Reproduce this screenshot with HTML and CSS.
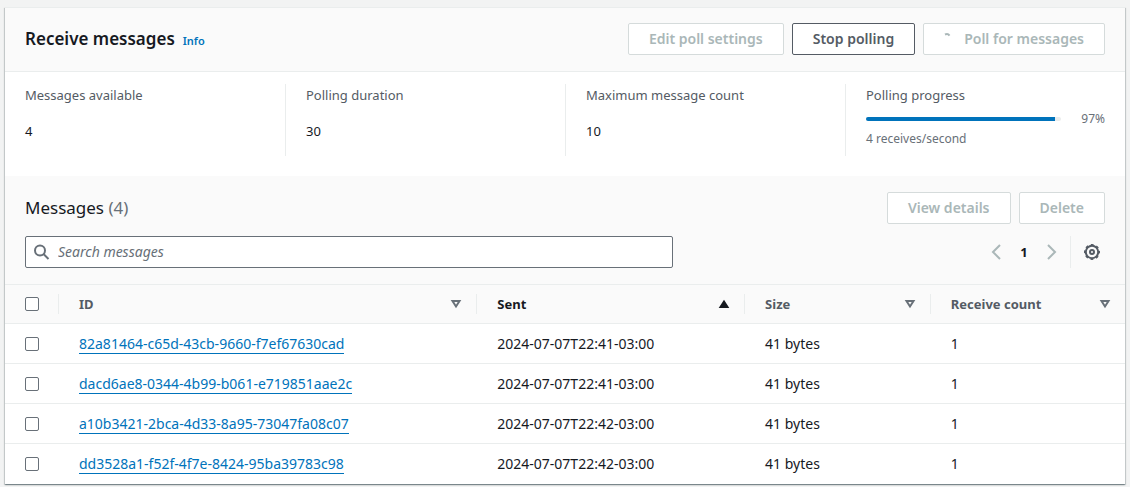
FILE: index.html
```html
<!DOCTYPE html>
<html lang="en">
<head>
<meta charset="utf-8">
<meta name="viewport" content="width=device-width, initial-scale=1">
<title>Receive messages</title>
<link rel="stylesheet" href="styles.css">
</head>
<body>
<main class="panel">
  <header class="panel-header">
    <div class="heading">
      <h1 class="title">Receive messages</h1>
      <a class="info" href="#info">Info</a>
    </div>
    <div class="actions">
      <button class="button" type="button" disabled>Edit poll settings</button>
      <button class="button" type="button">Stop polling</button>
      <button class="button button-loading" type="button" disabled>
        <svg class="spinner" viewBox="0 0 16 16" aria-hidden="true"><path d="M1 3.500C3 2.500 4.500 3 5.500 4.600"/></svg>
        Poll for messages
      </button>
    </div>
  </header>

  <section class="stats">
    <div class="stat"><div class="label">Messages available</div><div class="value">4</div></div>
    <div class="stat"><div class="label">Polling duration</div><div class="value">30</div></div>
    <div class="stat"><div class="label">Maximum message count</div><div class="value">10</div></div>
    <div class="stat">
      <div class="label">Polling progress</div>
      <div class="progress-row">
        <div class="track" role="progressbar" aria-label="Polling progress" aria-valuenow="97" aria-valuemin="0" aria-valuemax="100"><div class="fill" style="width:97%"></div></div>
        <span class="percent">97%</span>
      </div>
      <div class="rate">4 receives/second</div>
    </div>
  </section>

  <section>
    <div class="list-header">
      <div class="list-top">
        <h2 class="subtitle">Messages <span class="counter">(4)</span></h2>
        <div class="actions">
          <button class="button" type="button" disabled>View details</button>
          <button class="button" type="button" disabled>Delete</button>
        </div>
      </div>
      <div class="tools">
        <label class="search">
          <svg class="icon" viewBox="0 0 16 16" aria-hidden="true"><circle cx="6" cy="6.500" r="5"/><path d="M9.500 10l5 5"/></svg>
          <input class="search-input" type="search" placeholder="Search messages" aria-label="Search messages">
        </label>
        <div class="pager">
          <button class="icon-button" type="button" aria-label="Previous page" disabled><svg class="icon" viewBox="0 0 16 16"><path d="M12 1L5 8l7 7"/></svg></button>
          <button class="page" type="button" aria-current="page">1</button>
          <button class="icon-button" type="button" aria-label="Next page" disabled><svg class="icon" viewBox="0 0 16 16"><path d="M4 1l7 7-7 7"/></svg></button>
          <div class="settings">
            <button class="icon-button" type="button" aria-label="Preferences"><svg class="icon" viewBox="0 0 16 16"><circle cx="8" cy="8" r="6.200"/><circle cx="8" cy="8" r="7.300" stroke-width="1.400" stroke-dasharray="2.867 2.867" stroke-dashoffset="1.433"/><circle cx="8" cy="8" r="2"/></svg></button>
          </div>
        </div>
      </div>
    </div>

    <table class="table">
      <colgroup><col class="col-check"><col class="col-id"><col class="col-sent"><col class="col-size"><col class="col-count"></colgroup>
      <thead>
        <tr>
          <th scope="col"><div class="head"><input class="check" type="checkbox" aria-label="Select all messages"></div></th>
          <th scope="col"><div class="head">ID<svg class="sort" viewBox="0 0 12 10" aria-hidden="true"><path d="M2.500 2h7L6 7.500z"/></svg></div></th>
          <th scope="col" class="sorted" aria-sort="ascending"><div class="head">Sent<svg class="sort" viewBox="0 0 12 10" aria-hidden="true"><path d="M2.500 8h7L6 2.500z"/></svg></div></th>
          <th scope="col"><div class="head">Size<svg class="sort" viewBox="0 0 12 10" aria-hidden="true"><path d="M2.500 2h7L6 7.500z"/></svg></div></th>
          <th scope="col"><div class="head">Receive count<svg class="sort" viewBox="0 0 12 10" aria-hidden="true"><path d="M2.500 2h7L6 7.500z"/></svg></div></th>
        </tr>
      </thead>
      <tbody>
        <tr><td><input class="check" type="checkbox" aria-label="Select message 82a81464"></td><td><a class="link" href="#m1">82a81464-c65d-43cb-9660-f7ef67630cad</a></td><td>2024-07-07T22:41-03:00</td><td>41 bytes</td><td>1</td></tr>
        <tr><td><input class="check" type="checkbox" aria-label="Select message dacd6ae8"></td><td><a class="link" href="#m2">dacd6ae8-0344-4b99-b061-e719851aae2c</a></td><td>2024-07-07T22:41-03:00</td><td>41 bytes</td><td>1</td></tr>
        <tr><td><input class="check" type="checkbox" aria-label="Select message a10b3421"></td><td><a class="link" href="#m3">a10b3421-2bca-4d33-8a95-73047fa08c07</a></td><td>2024-07-07T22:42-03:00</td><td>41 bytes</td><td>1</td></tr>
        <tr><td><input class="check" type="checkbox" aria-label="Select message dd3528a1"></td><td><a class="link" href="#m4">dd3528a1-f52f-4f7e-8424-95ba39783c98</a></td><td>2024-07-07T22:42-03:00</td><td>41 bytes</td><td>1</td></tr>
      </tbody>
    </table>
  </section>
</main>
</body>
</html>
```
FILE: styles.css
```css
* { box-sizing: border-box; }
body {
  margin: 0;
  padding: 7px 5px 2px;
  background: #f2f3f3;
  color: #16191f;
  font: 13px/20px "Noto Sans", "Open Sans", sans-serif;
}
button, input { font: inherit; color: inherit; }

.panel {
  background: #fff;
  border-top: 1px solid #eaeded;
  box-shadow: 0 1px 1px 0 rgba(0, 28, 36, .3), 1px 1px 1px 0 rgba(0, 28, 36, .15), -1px 1px 1px 0 rgba(0, 28, 36, .15);
}
.panel-header {
  display: flex;
  justify-content: space-between;
  align-items: center;
  padding: 15px 20px 16px;
  background: #fafafa;
  border-bottom: 1px solid #eaeded;
}
.heading { display: flex; align-items: baseline; gap: 8px; }
.title { margin: 0; font-size: 17px; line-height: 24px; font-weight: 600; }
.info { color: #0073bb; font-size: 11px; font-weight: 600; text-decoration: none; }

.actions { display: flex; gap: 8px; }
.button {
  height: 32px;
  padding: 0 20px;
  border: 1px solid #545b64;
  border-radius: 2px;
  background: #fff;
  color: #545b64;
  font-size: 14px;
  font-weight: 600;
  white-space: nowrap;
}
.button:disabled { border-color: #d5dbdb; color: #aab7b8; }
.button-loading { display: flex; align-items: center; gap: 4px; }
.spinner { width: 16px; height: 16px; fill: none; stroke: #aab7b8; stroke-width: 2; }

.stats {
  display: grid;
  grid-template-columns: repeat(4, 1fr);
  padding: 12px 0 20px;
}
.stat { min-height: 72px; padding: 1px 20px 0; }
.stat + .stat { border-left: 1px solid #eaeded; }
.label { color: #545b64; }
.value { margin-top: 16px; }
.progress-row { display: flex; align-items: center; gap: 20px; margin-top: 4px; }
.track { flex: 1; height: 4px; border-radius: 4px; background: #eaeded; overflow: hidden; }
.fill { height: 100%; background: #0073bb; }
.percent, .rate { color: #687078; font-size: 12px; }

.list-header { padding: 16px 20px; background: #fafafa; border-bottom: 1px solid #eaeded; }
.list-top { display: flex; justify-content: space-between; align-items: center; }
.subtitle { margin: 0; font-size: 17px; line-height: 24px; font-weight: 400; }
.counter { color: #687078; }
.tools { display: flex; justify-content: space-between; margin-top: 12px; }
.search {
  display: flex;
  align-items: center;
  gap: 8px;
  width: 60%;
  height: 32px;
  padding: 0 8px;
  border: 1px solid #687078;
  border-radius: 2px;
  background: #fff;
  color: #687078;
}
.search-input { flex: 1; min-width: 0; padding: 0; border: 0; outline: 0; background: none; font-size: 14px; appearance: none; }
.search-input::placeholder { color: #687078; font-style: italic; opacity: 1; }
.icon { display: block; width: 16px; height: 16px; fill: none; stroke: currentColor; stroke-width: 2; }
.pager { display: flex; align-items: center; }
.icon-button { padding: 0; border: 0; background: none; color: #545b64; }
.icon-button:disabled { color: #aab7b8; }
.page { width: 40px; padding: 0; border: 0; background: none; font-weight: 700; }
.settings { display: flex; align-items: center; height: 32px; margin-left: 10px; padding: 0 5px 0 13px; border-left: 1px solid #eaeded; }

.table { width: 100%; border-collapse: separate; border-spacing: 0; table-layout: fixed; }
.col-check { width: 53px; }
.col-id { width: 39.2%; }
.col-sent { width: 25.1%; }
.col-size { width: 17.4%; }
.col-count { width: 18.3%; }
th { height: 39px; padding: 0; background: #fafafa; border-bottom: 1px solid #eaeded; color: #545b64; font-weight: 700; text-align: left; }
.sorted { color: #16191f; }
.head { display: flex; align-items: center; justify-content: space-between; height: 20px; padding: 0 14px 0 20px; }
th + th .head { border-left: 1px solid #eaeded; }
.sort { width: 12px; height: 10px; fill: none; stroke: #687078; stroke-width: 2; }
.sorted .sort { fill: #16191f; stroke: #16191f; }
td { height: 40px; padding: 0 20px; border-bottom: 1px solid #eaeded; font-size: 14px; }
td + td { padding-left: 21px; }
tbody tr:last-child td { border-bottom-color: transparent; }
.check { display: block; appearance: none; width: 14px; height: 14px; margin: 0; border: 1px solid #687078; border-radius: 2px; background: #fff; }
.link { color: #0073bb; text-decoration: none; border-bottom: 1px solid #0073bb; }
```
